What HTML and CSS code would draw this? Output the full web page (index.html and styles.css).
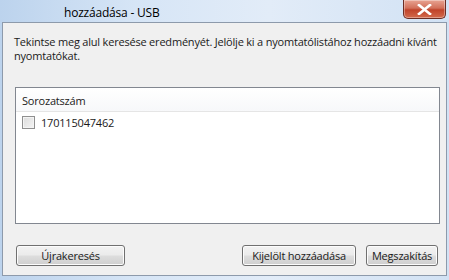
FILE: index.html
```html
<!DOCTYPE html>
<html lang="hu">
<head>
<meta charset="utf-8">
<link rel="stylesheet" href="styles.css">
</head>
<body>
<div class="window">
  <div class="titlebar">
    <span class="title">hozzáadása - USB</span>
    <button class="close" aria-label="Bezárás">
      <svg width="15" height="11" viewBox="0 0 15 11"><path d="M2 1 L13 10 M13 1 L2 10" stroke="#fff" stroke-width="2.6" stroke-linecap="square"/></svg>
    </button>
  </div>
  <div class="panel">
    <p class="intro">Tekintse meg alul keresése eredményét. Jelölje ki a nyomtatólistához hozzáadni kívánt nyomtatókat.</p>
    <div class="list">
      <div class="list-header">Sorozatszám</div>
      <label class="row"><span class="check"></span>170115047462</label>
    </div>
    <div class="buttons">
      <button class="btn btn-rescan">Újrakeresés</button>
      <span class="spacer"></span>
      <button class="btn btn-add">Kijelölt hozzáadása</button>
      <button class="btn btn-cancel">Megszakítás</button>
    </div>
  </div>
</div>
</body>
</html>
```
FILE: styles.css
```css
* { box-sizing: border-box; }
html, body { margin: 0; padding: 0; }
body {
  width: 449px;
  height: 280px;
  overflow: hidden;
  font-family: "Open Sans", "Noto Sans", sans-serif;
  font-size: 11px;
  letter-spacing: -0.2px;
  color: #1a1a1a;
  background: #c4d8ef;
}
.window {
  display: flex;
  flex-direction: column;
  height: 280px;
  padding: 0 2px 4px 2px;
  background: linear-gradient(90deg, #bcd3ed 0%, #d6e5f6 30%, #e2ecf8 60%, #d2e2f4 100%);
}
.titlebar {
  height: 22px;
  display: flex;
  align-items: flex-start;
  position: relative;
}
.title {
  margin-left: 62px;
  margin-top: 4px;
  font-size: 12px;
  letter-spacing: -0.2px;
  color: #000;
}
.close {
  position: absolute;
  right: 1px;
  top: 0;
  width: 43px;
  height: 19px;
  border: 1px solid #6b2d24;
  border-top: none;
  border-radius: 0 0 5px 5px;
  background: linear-gradient(180deg, #e8a493 0%, #d2705a 45%, #c0432a 55%, #d36a4c 100%);
  display: flex;
  align-items: center;
  justify-content: center;
  padding: 0;
  box-shadow: inset 0 0 0 1px rgba(255,255,255,0.35);
}
.panel {
  flex: 1;
  display: flex;
  flex-direction: column;
  background: #f0f0f0;
  border: 1px solid #8d9aab;
  padding: 0 8px 9px 11px;
}
.intro {
  margin: 12px 0 0 0;
  line-height: 14px;
  width: 426px;
}
.list {
  margin-top: 24px;
  margin-left: 1px;
  width: 425px;
  height: 137px;
  background: #fff;
  border: 1px solid #828790;
}
.list-header {
  height: 24px;
  padding: 5px 0 0 6px;
  border-bottom: 1px solid #e5e5e5;
  background: linear-gradient(180deg, #ffffff 0%, #f7f8fa 100%);
}
.row {
  display: flex;
  align-items: center;
  height: 19px;
  padding: 2px 0 0 6px;
  gap: 6px;
}
.check {
  width: 13px;
  height: 13px;
  border: 1px solid #8f8f8f;
  background: linear-gradient(135deg, #dcdcdc 0%, #f4f4f4 100%);
  box-shadow: inset 0 0 0 1px #f4f4f4;
}
.buttons {
  margin-top: auto;
  display: flex;
  padding-left: 2px;
}
.spacer { flex: 1; }
.btn {
  font-family: inherit;
  font-size: 11px;
  letter-spacing: -0.2px;
  height: 21px;
  padding: 0;
  border: 1px solid #707070;
  border-radius: 3px;
  background: linear-gradient(180deg, #f2f2f2 0%, #ebebeb 48%, #dddddd 52%, #cfcfcf 100%);
  box-shadow: inset 0 0 0 1px #fcfcfc;
  color: #1a1a1a;
}
.btn-rescan { width: 109px; }
.btn-add { width: 114px; }
.btn-cancel { width: 72px; margin-left: 10px; }
```
